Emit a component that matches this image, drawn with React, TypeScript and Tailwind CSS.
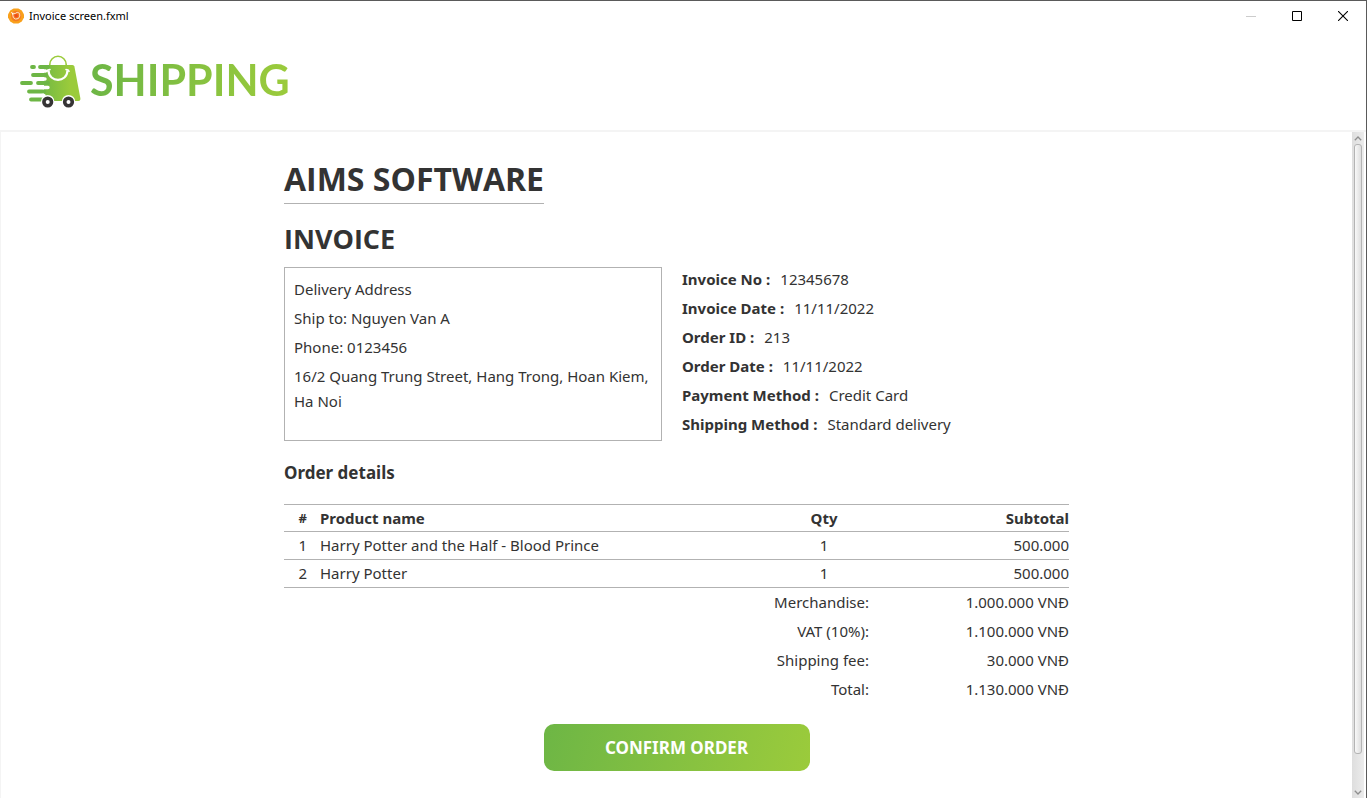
import React from "react";

const details = [
  ["Invoice No :", "12345678"],
  ["Invoice Date :", "11/11/2022"],
  ["Order ID :", "213"],
  ["Order Date :", "11/11/2022"],
  ["Payment Method :", "Credit Card"],
  ["Shipping Method :", "Standard delivery"],
];

const products = [
  { name: "Harry Potter and the Half - Blood Prince", qty: 1, subtotal: "500.000" },
  { name: "Harry Potter", qty: 1, subtotal: "500.000" },
];

const totals = [
  ["Merchandise:", "1.000.000 VNĐ"],
  ["VAT (10%):", "1.100.000 VNĐ"],
  ["Shipping fee:", "30.000 VNĐ"],
  ["Total:", "1.130.000 VNĐ"],
];

function AppIcon() {
  return (
    <svg width="16" height="16" viewBox="0 0 16 16" fill="none" aria-hidden="true">
      <path d="M5.6 .4h4.8l3.4 2 2.2 4v3.2l-2.2 4-3.4 2H5.6l-3.4-2L0 9.6V6.4l2.2-4z" fill="#f9a01b" />
      <circle cx="8" cy="8" r="5.2" fill="#f47b20" />
      <path d="M4.2 5.2l3 .3 2-1.2 2.4 1 .2 2.8-1.4 2.4-2.8.6-2.2-1.4-.6-2.4z" stroke="#ffe3cc" strokeWidth="1" />
      <circle cx="8.2" cy="7.8" r="1.7" fill="#ee4a1c" />
      <path d="M3.4 4.2l2 2.2" stroke="#fff" />
    </svg>
  );
}

function CartLogo() {
  return (
    <svg width="62" height="54" viewBox="0 0 62 54" fill="none" aria-hidden="true">
      <defs>
        <linearGradient id="bag" gradientUnits="userSpaceOnUse" x1="18" y1="0" x2="50" y2="0">
          <stop offset="0" stopColor="#6db645" />
          <stop offset="1" stopColor="#9bcb3b" />
        </linearGradient>
      </defs>
      <path d="M29.8 11v-1.5a8.2 8.2 0 0 1 16.4 0V11" stroke="#9bcb3b" strokeWidth="1.6" />
      <path d="M24 10h28.5q1.5 0 1.9 1.5L60.3 43q.5 3-2 3H24z" fill="url(#bag)" />
      <g stroke="#6db645" strokeWidth="3.8" strokeLinecap="round">
        <path d="M12 12h2M20 12h8M13 20h13M2 28h9M18 28h10M9 36.5h15M11 44.5h13" />
      </g>
      <g stroke="#fff" strokeWidth="3.4" strokeLinecap="round">
        <path d="M22 16h3.5M22 24h3M23 32.5h5M22 40.5h2" />
      </g>
      <path d="M28.5 15.5c.5 12.5 18.5 12.5 19 0" stroke="#fff" strokeWidth="2.2" />
      <path d="M27 16.2q.5-1.6 3-1.6M49 16.2q-.5-1.6-3-1.6" stroke="#fff" strokeWidth="1.6" strokeLinecap="round" />
      <circle cx="27.7" cy="46.5" r="6.6" fill="#fff" />
      <circle cx="27.7" cy="47" r="3.8" stroke="#363435" strokeWidth="3.6" />
      <circle cx="48.5" cy="46.5" r="6.6" fill="#fff" />
      <circle cx="48.5" cy="47" r="3.8" stroke="#363435" strokeWidth="3.6" />
    </svg>
  );
}

function TitleBar() {
  return (
    <div className="flex h-[29px] items-center justify-between pl-2">
      <div className="flex items-center gap-[5px] text-black">
        <AppIcon />
        <span className="text-[11px] leading-4">Invoice screen.fxml</span>
      </div>
      <div className="flex h-full">
        <button type="button" aria-label="Minimize" className="flex w-[46px] items-center justify-center">
          <svg width="10" height="10" viewBox="0 0 10 10" aria-hidden="true">
            <path d="M0 5.5h10" stroke="#ccc" />
          </svg>
        </button>
        <button type="button" aria-label="Maximize" className="flex w-[46px] items-center justify-center">
          <svg width="10" height="10" viewBox="0 0 10 10" fill="none" aria-hidden="true">
            <path d="M.5 .5h9v9h-9z" stroke="#000" />
          </svg>
        </button>
        <button type="button" aria-label="Close" className="flex w-[46px] items-center justify-center">
          <svg width="10" height="10" viewBox="0 0 10 10" aria-hidden="true">
            <path d="M0 0l10 10M10 0L0 10" stroke="#000" strokeWidth="1.1" />
          </svg>
        </button>
      </div>
    </div>
  );
}

function ScrollBar() {
  return (
    <div className="mr-[2px] flex w-3 shrink-0 flex-col bg-linear-to-r from-[#dedede] to-[#ececec]">
      <button type="button" aria-label="Scroll up" className="flex h-3 items-center justify-center">
        <svg width="8" height="5" viewBox="0 0 8 5" fill="none" aria-hidden="true">
          <path d="M.8 4.2L4 1l3.2 3.2" stroke="#8f8f8f" strokeWidth="1.3" />
        </svg>
      </button>
      <div className="flex min-h-0 flex-1 flex-col px-[2px]">
        <div className="basis-[95%] rounded-[3px] border border-[#b4b4b4] bg-linear-to-r from-[#f8f8f8] to-[#dedede]" />
      </div>
      <button type="button" aria-label="Scroll down" className="flex h-3 items-center justify-center">
        <svg width="8" height="5" viewBox="0 0 8 5" fill="none" aria-hidden="true">
          <path d="M.8 .8L4 4l3.2-3.2" stroke="#8f8f8f" strokeWidth="1.3" />
        </svg>
      </button>
    </div>
  );
}

function Invoice() {
  return (
    <main className="mx-auto w-[785px] max-w-full pt-[25px] pb-[27px]">
      <h1 className="w-fit border-b border-[#b2b2b2] pb-[3px] font-['Open_Sans',sans-serif] text-[32px] leading-[43px] font-bold">
        AIMS SOFTWARE
      </h1>
      <h2 className="mt-4 font-['Open_Sans',sans-serif] text-[27px] leading-[38px] font-bold">INVOICE</h2>

      <div className="mt-[9px] flex gap-5">
        <section className="flex h-[174px] w-[378px] shrink-0 flex-col gap-1 border border-[#b2b2b2] p-[9px]">
          <p>Delivery Address</p>
          <p>Ship to: Nguyen Van A</p>
          <p>Phone: 0123456</p>
          <p>16/2 Quang Trung Street, Hang Trong, Hoan Kiem, Ha Noi</p>
        </section>
        <dl className="flex flex-col gap-1">
          {details.map(([label, value]) => (
            <div key={label} className="flex gap-[10px]">
              <dt className="font-bold">{label}</dt>
              <dd>{value}</dd>
            </div>
          ))}
        </dl>
      </div>

      <h3 className="mt-5 text-[17px] leading-6 font-bold">Order details</h3>

      <table className="mt-[19px] w-full table-fixed border-collapse">
        <colgroup>
          <col className="w-9" />
          <col />
          <col className="w-[90px]" />
          <col className="w-[200px]" />
        </colgroup>
        <thead>
          <tr className="h-[27px] border-y border-[#b2b2b2]">
            <th className="pr-[13px] text-right text-[13px]">#</th>
            <th className="text-left">Product name</th>
            <th className="text-center">Qty</th>
            <th className="text-right">Subtotal</th>
          </tr>
        </thead>
        <tbody>
          {products.map((product, index) => (
            <tr key={product.name} className="h-7 border-b border-[#b2b2b2]">
              <td className="pr-[13px] text-right">{index + 1}</td>
              <td>{product.name}</td>
              <td className="text-center">{product.qty}</td>
              <td className="text-right">{product.subtotal}</td>
            </tr>
          ))}
        </tbody>
        <tfoot>
          {totals.map(([label, value]) => (
            <tr key={label} className="h-[29px]">
              <th colSpan={3} className="text-right font-normal">{label}</th>
              <td className="text-right">{value}</td>
            </tr>
          ))}
        </tfoot>
      </table>

      <div className="mt-5 flex justify-center">
        <button
          type="button"
          className="h-[47px] w-[266px] rounded-[10px] bg-linear-105 from-[#6db645] to-[#9bcb3b] text-[17px] font-bold text-white"
        >
          CONFIRM ORDER
        </button>
      </div>
    </main>
  );
}

export default function App() {
  return (
    <div className="flex h-screen flex-col overflow-hidden border-t border-r border-[#5a5a5a] bg-white font-['Noto_Sans',sans-serif] text-[15px] leading-[25px] text-[#333]">
      <TitleBar />
      <header className="flex h-[102px] shrink-0 items-center gap-2 border-b-2 border-[#f4f4f4] pt-[3px] pl-5">
        <CartLogo />
        <span className="bg-linear-to-r from-[#6db645] to-[#9bcb3b] bg-clip-text pb-1 font-['Lato',sans-serif] text-[43px] leading-[52px] font-bold text-transparent">
          SHIPPING
        </span>
      </header>
      <div className="flex min-h-0 flex-1">
        <div className="min-w-0 flex-1 overflow-hidden border-l border-[#f4f4f4]">
          <Invoice />
        </div>
        <ScrollBar />
      </div>
    </div>
  );
}
